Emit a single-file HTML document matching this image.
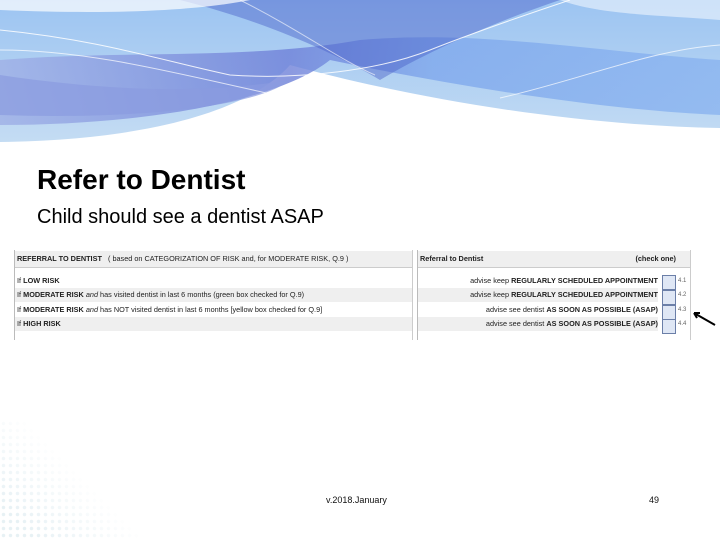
<!DOCTYPE html>
<html><head><meta charset="utf-8"><style>
body{margin:0;width:720px;height:540px;position:relative;overflow:hidden;background:#fff;font-family:"Liberation Sans",sans-serif}
.t{position:absolute;white-space:nowrap}
.row{position:absolute;height:14px;font-size:7.3px;line-height:14px;color:#222}
.g{background:#efefef}
b{font-weight:bold}
.box{position:absolute;width:12px;height:13px;border:1px solid #6b7fa8;background:#dfe7f5}
.dots{position:absolute;left:0;top:420px;width:150px;height:120px;
background-image:radial-gradient(circle,#d8e8ee 1.5px,transparent 2px);background-size:7px 7px;
-webkit-mask-image:linear-gradient(45deg,#000 15%,transparent 55%);mask-image:linear-gradient(45deg,#000 15%,transparent 55%);opacity:.6}
</style></head><body>
<svg width="720" height="150" style="position:absolute;left:0;top:0">
<defs>
<linearGradient id="a" x1="0" y1="0" x2="1" y2="0"><stop offset="0" stop-color="#9fb0e6"/><stop offset=".4" stop-color="#6e80d8"/><stop offset=".6" stop-color="#7fa8ec"/><stop offset="1" stop-color="#8ab4f0"/></linearGradient>
<linearGradient id="b" x1="0" y1="0" x2="0" y2="1"><stop offset="0" stop-color="#9cc4f2"/><stop offset="1" stop-color="#c4dcf3"/></linearGradient>
</defs>
<path d="M0 0H720V128C560 125 400 95 290 65C250 110 150 140 0 142Z" fill="url(#b)"/>
<path d="M0 60C120 50 250 60 360 40C480 30 580 50 720 60V115C600 110 450 85 330 60C280 100 150 125 0 125Z" fill="url(#a)" opacity=".8"/>
<path d="M0 75C100 90 200 95 290 80C260 105 150 120 0 115Z" fill="#8a9be0" opacity=".7"/>
<path d="M180 0C260 20 330 50 380 80C430 50 500 20 560 0Z" fill="#4a5fc8" opacity=".45"/>
<path d="M0 0H250C200 10 120 15 0 10Z" fill="#fff" opacity=".7"/>
<path d="M560 0H720V20C660 15 600 15 560 0Z" fill="#fff" opacity=".5"/>
<path d="M0 30C100 40 160 60 230 75C300 80 380 70 430 50C480 30 540 10 570 0" stroke="#fff" fill="none" opacity=".85"/>
<path d="M0 50C100 50 200 80 300 100" stroke="#fff" fill="none" opacity=".7"/>
<path d="M500 98C580 80 650 50 720 45" stroke="#fff" fill="none" opacity=".7"/>
<path d="M240 0C300 30 340 60 375 75" stroke="#fff" fill="none" opacity=".6"/>
</svg>
<div class="dots"></div>
<div class="t" style="left:37px;top:164px;font-size:28px;font-weight:bold;color:#000">Refer to Dentist</div>
<div class="t" style="left:37px;top:206px;font-size:20px;color:#000">Child should see a dentist ASAP</div>

<div style="position:absolute;left:14px;top:250px;width:397px;height:90px;border-left:1px solid #bbb;border-right:1px solid #ccc">
<div class="row g" style="top:1px;width:397px;height:16px;line-height:16px;border-bottom:1px solid #ccc">&nbsp;<b>REFERRAL TO DENTIST</b> &nbsp; ( based on CATEGORIZATION OF RISK and, for MODERATE RISK, Q.9 )</div>
<div class="row" style="top:24px;width:397px">&nbsp;If <b>LOW RISK</b></div>
<div class="row g" style="top:38px;width:397px">&nbsp;If <b>MODERATE RISK</b> <i>and</i> has visited dentist in last 6 months (green box checked for Q.9)</div>
<div class="row" style="top:53px;width:397px">&nbsp;If <b>MODERATE RISK</b> <i>and</i> has NOT visited dentist in last 6 months [yellow box checked for Q.9]</div>
<div class="row g" style="top:67px;width:397px">&nbsp;If <b>HIGH RISK</b></div>
</div>
<div style="position:absolute;left:417px;top:250px;width:272px;height:90px;border-left:1px solid #bbb;border-right:1px solid #ccc">
<div class="row g" style="top:1px;width:272px;height:16px;line-height:16px;border-bottom:1px solid #ccc">&nbsp;<b>Referral to Dentist</b><span style="position:absolute;right:14px"><b>(check one)</b></span></div>
<div class="row" style="top:24px;width:240px;text-align:right">advise keep <b>REGULARLY SCHEDULED APPOINTMENT</b></div>
<div class="row g" style="top:38px;width:240px;text-align:right">advise keep <b>REGULARLY SCHEDULED APPOINTMENT</b></div>
<div class="row" style="top:53px;width:240px;text-align:right">advise see dentist <b>AS SOON AS POSSIBLE (ASAP)</b></div>
<div class="row g" style="top:67px;width:240px;text-align:right">advise see dentist <b>AS SOON AS POSSIBLE (ASAP)</b></div>
<div class="box" style="left:244px;top:25px"></div>
<div class="box" style="left:244px;top:40px"></div>
<div class="box" style="left:244px;top:55px"></div>
<div class="box" style="left:244px;top:69px"></div>
<div class="row" style="left:260px;top:24px;font-size:6px;color:#666">4.1</div>
<div class="row" style="left:260px;top:38px;font-size:6px;color:#666">4.2</div>
<div class="row" style="left:260px;top:53px;font-size:6px;color:#666">4.3</div>
<div class="row" style="left:260px;top:67px;font-size:6px;color:#666">4.4</div>
</div>
<svg width="40" height="30" style="position:absolute;left:690px;top:308px"><path d="M25 17L4 5M4 5L10 5M4 5L7 10" stroke="#000" stroke-width="2" fill="none"/></svg>

<div class="t" style="left:326px;top:495px;font-size:9px;color:#111">v.2018.January</div>
<div class="t" style="left:649px;top:495px;font-size:9px;color:#111">49</div>
</body></html>
